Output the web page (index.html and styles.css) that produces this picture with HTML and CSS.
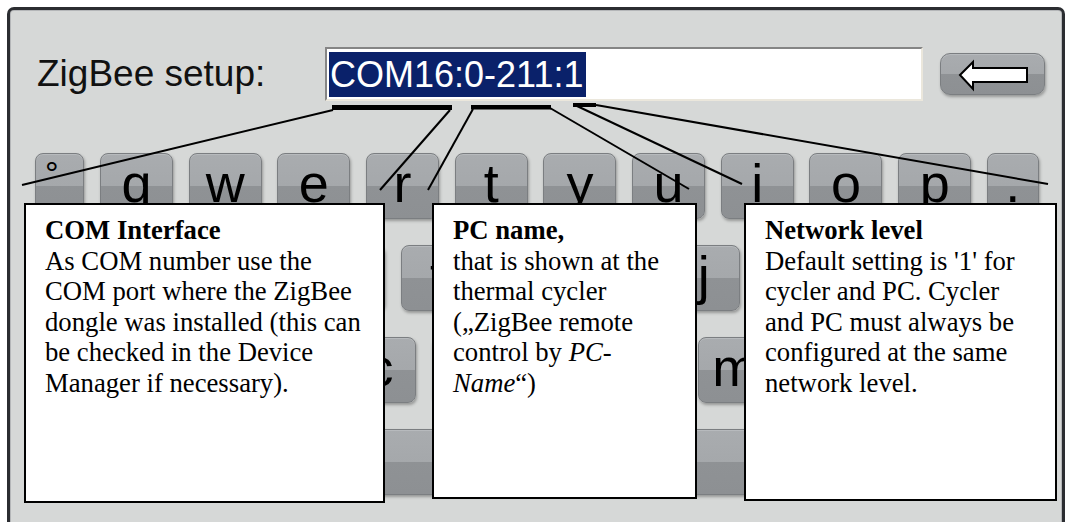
FILE: index.html
```html
<!DOCTYPE html>
<html lang="en">
<head>
	<meta charset="UTF-8"/>
	<meta name="viewport" content="width=device-width, initial-scale=1"/>
	<title>ZigBee setup</title>
	<link rel="stylesheet" href="styles.css">
</head>
<body>

<div class="screen">
	<div class="entry-row">
		<span class="entry-label">ZigBee setup:</span>
		<div class="entry-field"><span class="selected">COM16:0-211:1</span></div>
		<button class="key back-key" aria-label="Backspace">
			<svg width="105" height="42" viewBox="0 0 105 42">
				<polygon points="20,22 33,9 33,15 87,15 87,29 33,29 33,36" fill="#fff" stroke="#000" stroke-width="2" stroke-linejoin="miter"/>
			</svg>
		</button>
	</div>

	<!-- on-screen keyboard -->
	<div class="keyboard">
		<div class="key-row row-1">
			<span class="key key-deg">°</span>
			<span class="key">q</span>
			<span class="key">w</span>
			<span class="key">e</span>
			<span class="key">r</span>
			<span class="key">t</span>
			<span class="key">y</span>
			<span class="key">u</span>
			<span class="key">i</span>
			<span class="key">o</span>
			<span class="key">p</span>
			<span class="key key-dot">.</span>
		</div>
		<div class="key-row row-2">
			<span class="key">a</span>
			<span class="key">s</span>
			<span class="key">d</span>
			<span class="key">f</span>
			<span class="key">g</span>
			<span class="key">h</span>
			<span class="key">j</span>
			<span class="key">k</span>
			<span class="key">l</span>
		</div>
		<div class="key-row row-3">
			<span class="key">z</span>
			<span class="key">x</span>
			<span class="key">c</span>
			<span class="key">v</span>
			<span class="key">b</span>
			<span class="key">n</span>
			<span class="key">m</span>
		</div>
		<div class="key-row row-4">
			<span class="key key-space"></span>
		</div>
	</div>
</div>

<!-- leader lines from the input parts to the notes -->
<svg class="leaders" width="1066" height="522" viewBox="0 0 1066 522">
	<rect x="332" y="105" width="120" height="5" fill="#000"/>
	<rect x="471" y="105" width="80" height="4.5" fill="#000"/>
	<rect x="573" y="103" width="23" height="4" fill="#000"/>
	<g stroke="#000" stroke-width="2">
		<line x1="333" y1="110" x2="22" y2="185"/>
		<line x1="450" y1="110" x2="380" y2="190"/>
		<line x1="473" y1="109" x2="428" y2="190"/>
		<line x1="550" y1="108" x2="689" y2="189"/>
		<line x1="577" y1="106" x2="742" y2="184"/>
		<line x1="596" y1="105" x2="1048" y2="184"/>
	</g>
</svg>

<div class="callouts">
	<div class="callout callout-com">
		<b>COM Interface</b><br>
		As COM number use the<br>
		COM port where the ZigBee<br>
		dongle was installed (this can<br>
		be checked in the Device<br>
		Manager if necessary).
	</div>
	<div class="callout callout-pc">
		<b>PC name,</b><br>
		that is shown at the<br>
		thermal cycler<br>
		(&bdquo;ZigBee remote<br>
		control by <i>PC</i>-<br>
		<i>Name</i>&ldquo;)
	</div>
	<div class="callout callout-net">
		<b>Network level</b><br>
		Default setting is '1' for<br>
		cycler and PC. Cycler<br>
		and PC must always be<br>
		configured at the same<br>
		network level.
	</div>
</div>

</body>
</html>
```

FILE: styles.css
```css
html, body {
    margin: 0;
    height: 522px;
    overflow: hidden;
    background: #fff;
    font-family: "Liberation Sans", Arial, sans-serif;
}

.screen {
    margin: 7px 1px 0 7px;
    height: 530px;
    box-sizing: border-box;
    background: #d6d8d7;
    border: 3px solid #2b2d31;
    border-bottom: none;
    border-radius: 7px 7px 0 0;
    box-shadow: inset 0 1px 0 #b4b6b8, inset 1px 0 0 #b4b6b8, inset -1px 0 0 #b4b6b8;
}

.entry-row {
    display: flex;
    align-items: center;
    padding: 37px 0 0 27px;
}

.entry-label {
    width: 288px;
    font-size: 37px;
    color: #111;
}

.entry-field {
    width: 598px;
    height: 54px;
    box-sizing: border-box;
    background: #fff;
    border-top: 2px solid #858585;
    border-left: 2px solid #858585;
    border-bottom: 2px solid #ebe7dc;
    border-right: 2px solid #ebe7dc;
    padding: 3px 2px;
}

.selected {
    display: inline-block;
    background: #0a216a;
    color: #fff;
    font-size: 36px;
    line-height: 45px;
    height: 45px;
    padding: 0 3px 0 1px;
}

.key {
    display: block;
    flex: 0 0 auto;
    width: 73px;
    height: 66px;
    box-sizing: border-box;
    border: 1px solid #7b7e81;
    border-radius: 8px;
    background: linear-gradient(#a9acaf 0, #a5a8ab 50%, #8f9295 50%, #8d9093 100%);
    box-shadow: 1px 2px 3px rgba(0, 0, 0, 0.3), inset 0 1px 0 #b7babd;
    font-family: "Liberation Sans", Arial, sans-serif;
    font-size: 54px;
    line-height: 58px;
    text-align: center;
    color: #000;
}

.back-key {
    width: 105px;
    height: 42px;
    margin-left: 17px;
    padding: 0;
    border-radius: 10px;
}

.back-key svg {
    display: block;
    margin: -1px;
}

.keyboard {
    margin-top: 52px;
    display: flex;
    flex-direction: column;
    gap: 26px;
}

.key-row {
    display: flex;
    gap: 15.7px;
}

.row-1 {
    padding-left: 25px;
}

.row-2 {
    padding-left: 125px;
}

.row-3,
.row-4 {
    padding-left: 156px;
}

.key-deg {
    width: 49.3px;
    text-align: left;
    padding-left: 9px;
    font-size: 34px;
    line-height: 38px;
}

.key-dot {
    width: 52px;
}

.key-space {
    width: 720px;
}

.leaders {
    position: absolute;
    top: 0;
    left: 0;
}

.callouts {
    position: absolute;
    top: 203px;
    left: 0;
    display: flex;
    align-items: flex-start;
    gap: 47px;
    padding-left: 24px;
}

.callout {
    box-sizing: border-box;
    background: #fff;
    border: 2px solid #000;
    padding: 10px 10px 0 19px;
    font-family: "Liberation Serif", "Times New Roman", serif;
    font-size: 26.7px;
    line-height: 30.5px;
    color: #000;
    white-space: nowrap;
}

.callout-com {
    width: 361px;
    height: 300px;
}

.callout-pc {
    width: 265px;
    height: 296px;
}

.callout-net {
    width: 313px;
    height: 298px;
}
```
